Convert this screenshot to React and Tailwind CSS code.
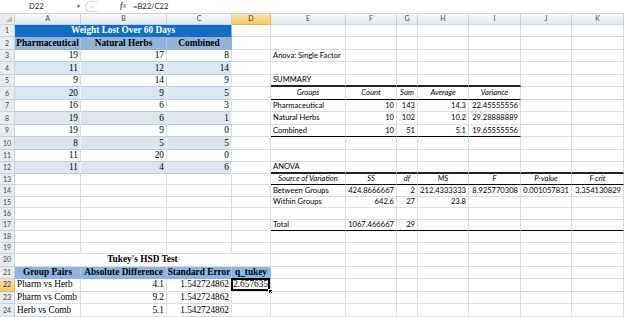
import React from 'react';

const COLS = 'grid grid-cols-[15px_66px_86px_65px_39px_75px_51px_21px_51px_52px_51px_52px]';
const SERIF = "font-['Liberation_Serif',serif] text-[9.3px]";
const SANS = "font-['Lato',sans-serif] text-[7.6px]";

// left table values, rows 3-12
const weights = [
  [19, 17, 8],
  [11, 12, 14],
  [9, 14, 9],
  [20, 9, 5],
  [16, 6, 3],
  [19, 6, 1],
  [19, 9, 0],
  [8, 5, 5],
  [11, 20, 0],
  [11, 4, 6],
];

const HDR_TOP = 'border-b-2 border-b-[#222]';
const HDR_BOT = 'border-b-black';

const txt = (t, a = 'l', k = '') => ({ t, a, k });
const hd = (t, k = '') => ({ t, a: 'c', k: `italic ${k}` });

// right side cells E..K per row
const right = {
  3: [txt('Anova: Single Factor')],
  5: [txt('SUMMARY', 'l', HDR_TOP), txt('', 'l', HDR_TOP), txt('', 'l', HDR_TOP), txt('', 'l', HDR_TOP), txt('', 'l', HDR_TOP)],
  6: ['Groups', 'Count', 'Sum', 'Average', 'Variance'].map((t) => hd(t, HDR_BOT)),
  7: [txt('Pharmaceutical'), txt('10', 'r'), txt('143', 'r'), txt('14.3', 'r'), txt('22.45555556', 'r')],
  8: [txt('Natural Herbs'), txt('10', 'r'), txt('102', 'r'), txt('10.2', 'r'), txt('29.28888889', 'r')],
  9: [
    txt('Combined', 'l', HDR_BOT),
    txt('10', 'r', HDR_BOT),
    txt('51', 'r', HDR_BOT),
    txt('5.1', 'r', HDR_BOT),
    txt('19.65555556', 'r', HDR_BOT),
  ],
  12: [txt('ANOVA', 'l', HDR_TOP), ...Array.from({ length: 6 }, () => txt('', 'l', HDR_TOP))],
  13: ['Source of Variation', 'SS', 'df', 'MS', 'F', 'P-value', 'F crit'].map((t) => hd(t, HDR_BOT)),
  14: [
    txt('Between Groups'),
    txt('424.8666667', 'r'),
    txt('2', 'r'),
    txt('212.4333333', 'r'),
    txt('8.925770308', 'r'),
    txt('0.001057831', 'r'),
    txt('3.354130829', 'r'),
  ],
  15: [txt('Within Groups'), txt('642.6', 'r'), txt('27', 'r'), txt('23.8', 'r')],
  17: [
    txt('Total', 'l', HDR_BOT),
    txt('1067.466667', 'r', HDR_BOT),
    txt('29', 'r', HDR_BOT),
    ...Array.from({ length: 4 }, () => txt('', 'l', HDR_BOT)),
  ],
};

const rowHeight = (n) => {
  if (n <= 11) return 'h-[12.5px]';
  if (n <= 19) return 'h-[11.45px]';
  return 'h-[12.6px]';
};

const alignCls = { l: 'justify-start', r: 'justify-end', c: 'justify-center' };

const Cell = ({ t = '', a = 'l', k = '', span = 1, font = SANS, children }) => (
  <div
    className={`relative flex items-center whitespace-nowrap leading-none px-[2px] border-r border-b border-[#dadcdd] text-black ${alignCls[a]} ${font} ${k}`}
    style={span > 1 ? { gridColumn: `span ${span} / span ${span}` } : undefined}
  >
    {t}
    {children}
  </div>
);

const RowHead = ({ n, active }) => (
  <div
    className={`flex items-center justify-center border-r border-b text-[7px] font-['Lato',sans-serif] leading-none ${
      active
        ? 'bg-gradient-to-b from-[#fbe5ad] to-[#f3c867] border-[#e2b34f] text-[#333]'
        : 'bg-[#e9edf2] border-[#c9d1dc] text-[#444]'
    }`}
  >
    {n}
  </div>
);

const buildCells = (n) => {
  const cells = [];
  // A..C
  if (n === 1) {
    cells.push(
      <Cell key="a" span={3} a="c" t="Weight Lost Over 60 Days" font={SERIF} k="font-bold text-white bg-[#0f6fc6] border-r-[#95b3d7] border-b-[#0f6fc6]" />
    );
  } else if (n === 2) {
    ['Pharmaceutical', 'Natural Herbs', 'Combined'].forEach((t, i) =>
      cells.push(
        <Cell key={t} a="c" t={t} font={SERIF} k={`font-bold px-0 bg-[#95b3d7] border-b-[#95b3d7] ${i === 2 ? 'border-r-[#95b3d7]' : 'border-r-[#a9c2df]'}`} />
      )
    );
  } else if (n >= 3 && n <= 12) {
    const band = n % 2 === 0;
    weights[n - 3].forEach((v, i) =>
      cells.push(
        <Cell
          key={i}
          a="r"
          t={v}
          font={SERIF}
          k={`${band ? 'bg-[#dce6f1] border-r-[#eef3f9]' : 'bg-white border-r-[#dadcdd]'} border-b-[#b8cce4] ${i === 2 ? 'border-r-[#95b3d7]' : ''}`}
        />
      )
    );
  } else if (n === 20) {
    cells.push(<Cell key="t" span={4} a="c" t="Tukey's HSD Test" font={SERIF} k="font-bold" />);
  } else if (n === 21) {
    ['Group Pairs', 'Absolute Difference', 'Standard Error', 'q_tukey'].forEach((t) =>
      cells.push(<Cell key={t} a="c" t={t} font={SERIF} k="font-bold px-0 bg-[#8db4e2] border-r-[#a6c4e8] border-b-[#8db4e2]" />)
    );
  } else if (n >= 22 && n <= 24) {
    const pairs = {
      22: ['Pharm vs Herb', '4.1'],
      23: ['Pharm vs Comb', '9.2'],
      24: ['Herb vs Comb', '5.1'],
    };
    cells.push(<Cell key="a" t={pairs[n][0]} font={SERIF} k="px-[1px]" />);
    cells.push(<Cell key="b" a="r" t={pairs[n][1]} font={SERIF} />);
    cells.push(<Cell key="c" a="r" t="1.542724862" font={SERIF} />);
  } else {
    cells.push(<Cell key="a" />, <Cell key="b" />, <Cell key="c" />);
  }

  // D
  if (n !== 20 && n !== 21) {
    if (n === 22) {
      cells.push(
        <Cell key="d" a="r" t="2.657635" font={SERIF}>
          <div className="absolute -left-[1px] -top-[1px] right-0 bottom-0 border-2 border-black pointer-events-none" />
          <div className="absolute -right-[3px] -bottom-[3px] w-[5px] h-[5px] bg-black border border-white" />
        </Cell>
      );
    } else {
      cells.push(<Cell key="d" />);
    }
  }

  // E..K
  const r = right[n] || [];
  for (let i = 0; i < 7; i++) {
    const c = r[i];
    cells.push(<Cell key={`r${i}`} t={c?.t} a={c?.a} k={c?.k} />);
  }
  return cells;
};

const letters = ['A', 'B', 'C', 'D', 'E', 'F', 'G', 'H', 'I', 'J', 'K'];

export default function App() {
  const rows = Array.from({ length: 24 }, (_, i) => i + 1);

  return (
    <div className="w-[624px] h-[317px] overflow-hidden bg-white select-none">
      {/* Formula bar: name box | buttons | fx | formula */}
      <div className="h-[12.7px] grid grid-cols-[82px_38px_13px_1fr] items-center bg-white font-['Lato',sans-serif] text-[7.6px] text-[#222] leading-none">
        <div className="h-full flex items-center justify-between pl-[29px] pr-[1px]">
          <span>D22</span>
          <span className="text-[5px] text-[#444]">▼</span>
        </div>
        <div className="h-full flex items-center pl-[3px]">
          <div className="w-[12px] h-[11px] rounded-l-full border border-r-0 border-[#cfd4da] flex items-center justify-center text-[7px] text-[#bbb]">
            =
          </div>
        </div>
        <span className="italic font-['Liberation_Serif',serif] text-[8px] text-[#555]">
          <b>f</b>x
        </span>
        <span>=B22/C22</span>
      </div>

      {/* Column headers */}
      <div className={`${COLS} h-[12.3px] border-t border-[#c9d1dc]`}>
        <div className="relative bg-[#e9edf2] border-r border-b border-[#c9d1dc]">
          <div className="absolute right-[2px] bottom-[2px] w-0 h-0 border-l-[6px] border-l-transparent border-b-[6px] border-b-[#b4bcc7]" />
        </div>
        {letters.map((l) => (
          <div
            key={l}
            className={`flex items-center justify-center border-r border-b text-[7px] font-['Lato',sans-serif] leading-none ${
              l === 'D'
                ? 'bg-gradient-to-b from-[#fbe5ad] to-[#f3c867] border-[#e2b34f] text-[#333]'
                : 'bg-gradient-to-b from-[#f8fafc] to-[#e3e8ef] border-[#c9d1dc] text-[#444]'
            }`}
          >
            {l}
          </div>
        ))}
      </div>

      {/* Sheet rows */}
      {rows.map((n) => (
        <div key={n} className={`${COLS} ${rowHeight(n)}`}>
          <RowHead n={n} active={n === 22} />
          {buildCells(n)}
        </div>
      ))}
    </div>
  );
}
